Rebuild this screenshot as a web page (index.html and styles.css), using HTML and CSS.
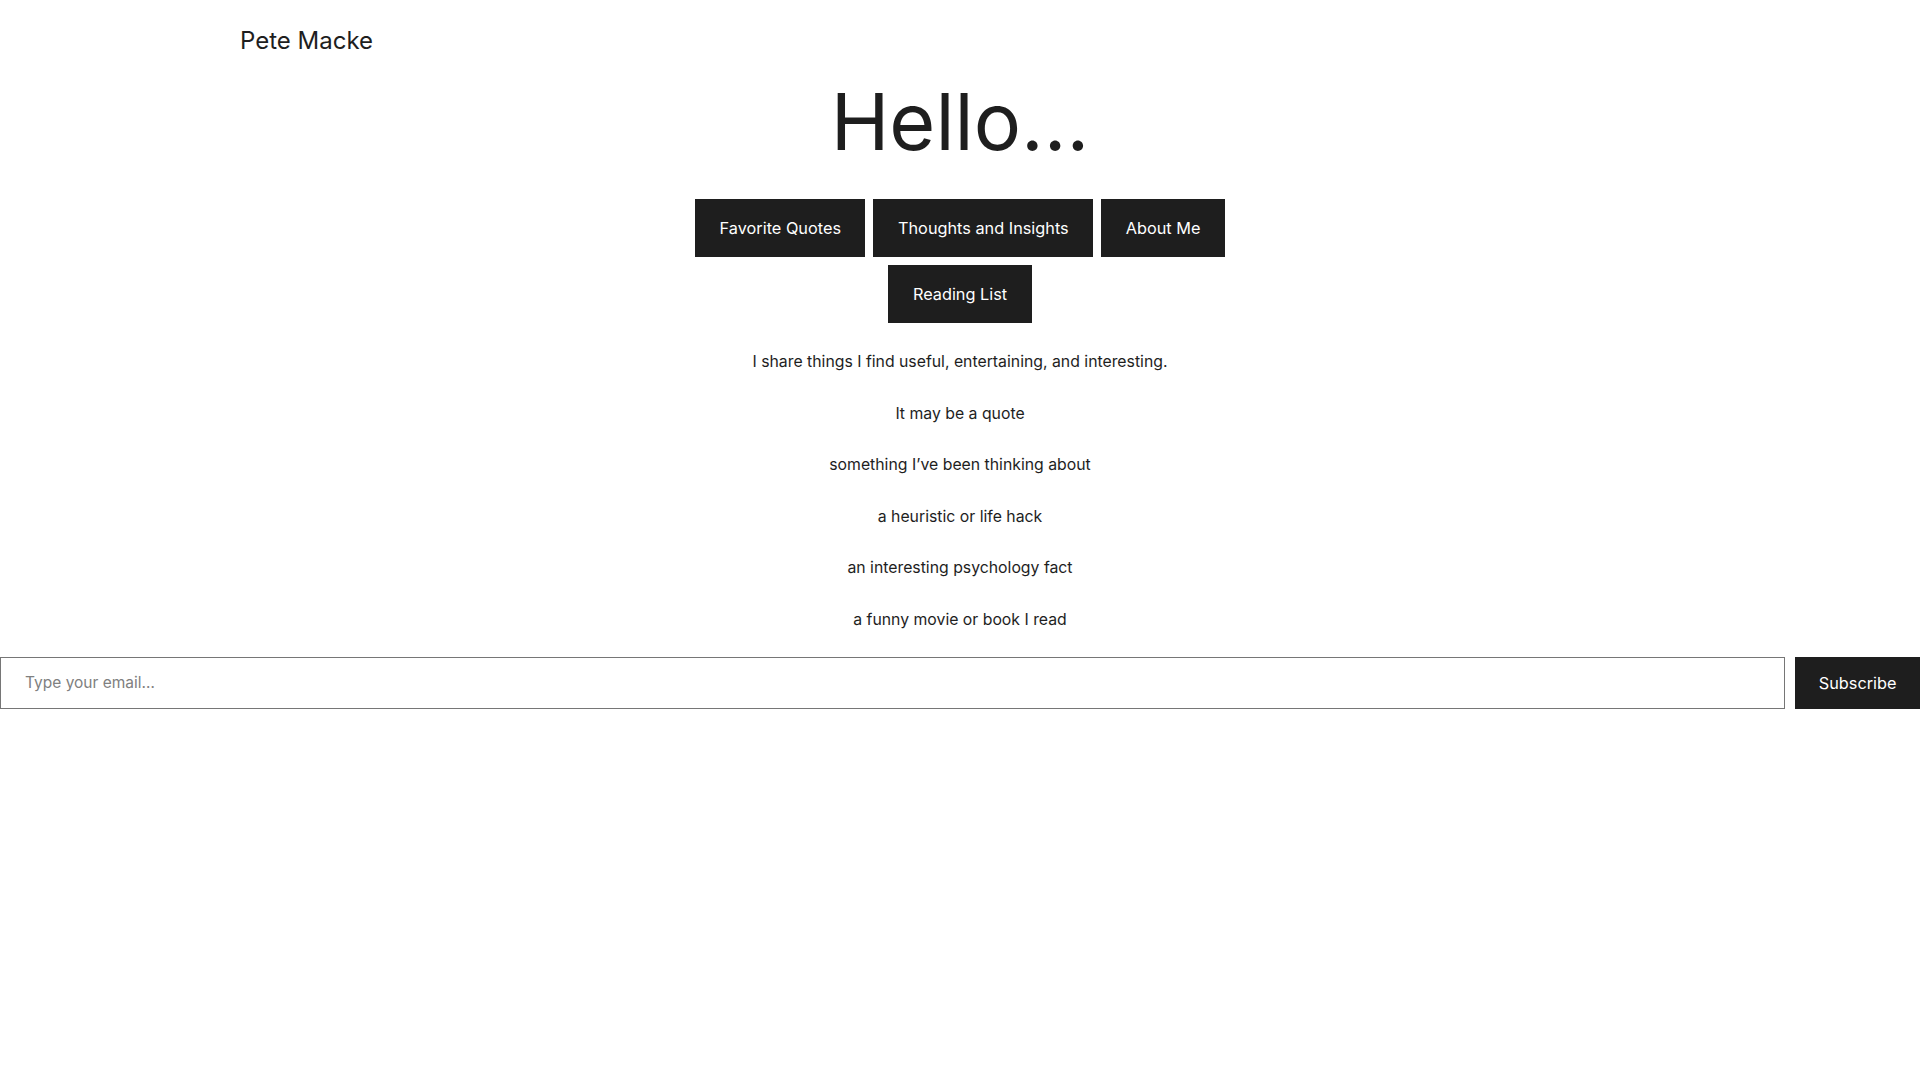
FILE: index.html
```html
<!DOCTYPE html>
<html lang="en">
<head>
<meta charset="utf-8">
<title>Pete Macke</title>
<link rel="stylesheet" href="styles.css">
</head>
<body>
<header class="site-header">
  <p class="site-title">Pete Macke</p>
</header>
<main class="content">
  <h1 class="hero">Hello…</h1>
  <nav class="buttons">
    <a class="btn" href="#">Favorite Quotes</a>
    <a class="btn" href="#">Thoughts and Insights</a>
    <a class="btn" href="#">About Me</a>
    <a class="btn" href="#">Reading List</a>
  </nav>
  <div class="intro">
    <p>I share things I find useful, entertaining, and interesting.</p>
    <p>It may be a quote</p>
    <p>something I’ve been thinking about</p>
    <p>a heuristic or life hack</p>
    <p>an interesting psychology fact</p>
    <p>a funny movie or book I read</p>
  </div>
</main>
<form class="subscribe" onsubmit="return false">
  <input class="email" type="email" placeholder="Type your email…">
  <button class="sub-btn" type="submit">Subscribe</button>
</form>
</body>
</html>
```
FILE: styles.css
```css
* { box-sizing: border-box; }
body {
  margin: 0;
  font-family: Inter, "Noto Sans", sans-serif;
  color: #1e1e1e;
  background: #fff;
}
.site-header { padding: 27px 0 0 240px; }
.site-title { margin: 0; font-size: 24px; line-height: 28px; font-weight: 400; }
.content { display: flex; flex-direction: column; align-items: center; }
.hero { margin: 27px 0 0; font-size: 79px; line-height: 79px; font-weight: 400; }
.buttons {
  margin-top: 38px;
  max-width: 600px;
  display: flex; flex-wrap: wrap; justify-content: center; gap: 8px;
}
.btn {
  display: flex; align-items: center;
  height: 58px; padding: 0 24.5px;
  background: #1e1e1e; color: #fff;
  text-decoration: none; font-size: 16.3px;
}
.intro {
  margin-top: 27px;
  display: flex; flex-direction: column; align-items: center; gap: 27.5px;
}
.intro p { margin: 0; font-size: 15.8px; line-height: 24px; }
.subscribe { margin-top: 25px; display: flex; gap: 10px; }
.email {
  flex: 1; height: 52px; margin: 0;
  border: 1px solid #767676; border-radius: 0;
  padding: 0 24px; font-family: inherit; font-size: 15.5px; color: #1e1e1e;
}
.email::placeholder { color: #808080; }
.sub-btn {
  height: 52px; padding: 0 23.5px; border: 0; margin: 0;
  background: #1e1e1e; color: #fff; font-family: inherit; font-size: 16.3px;
}
```
